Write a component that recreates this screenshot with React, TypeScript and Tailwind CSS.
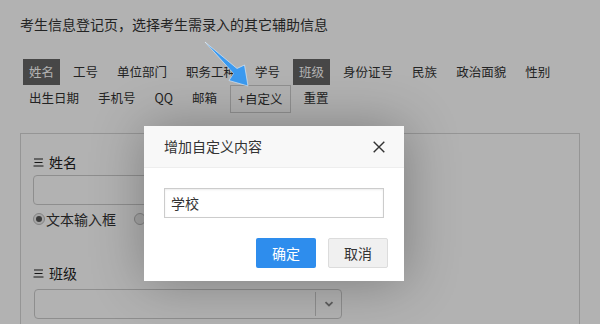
import React from 'react';

const font = { fontFamily: '"Noto Sans CJK SC", "Noto Sans", sans-serif' };

const rowOne = ['姓名', '工号', '单位部门', '职务工种', '学号', '班级', '身份证号', '民族', '政治面貌', '性别'];
const active = ['姓名', '班级'];

const Tag: React.FC<{ label: string; dark?: boolean; boxed?: boolean }> = ({ label, dark, boxed }) => (
    <span
        className={`h-[26px] mr-[7px] leading-[26px] text-[12.5px] whitespace-nowrap ${
            boxed ? 'h-[28px] px-[7px] border border-[#cfcfcf]' : 'px-[6px]'
        } ${dark ? 'bg-[#666] text-white' : 'text-[#333]'}`}
    >
        {label}
    </span>
);

const ListIcon = () => (
    <svg width="11" height="9" viewBox="0 0 11 9" className="mr-[5px]">
        <path d="M1 1H10M1.5 4.5H9.5M0.5 8H10.5" stroke="#222" strokeWidth="1.2" />
    </svg>
);

export default function App() {
    return (
        <div className="relative w-[600px] h-[324px] overflow-hidden bg-white" style={font}>
            {/* page */}
            <div className="px-5 pt-[14px]">
                <p className="text-[14px] leading-[20px] text-[#333]">考生信息登记页，选择考生需录入的其它辅助信息</p>

                <div className="mt-[25px] pl-[3px] flex items-start">
                    {rowOne.map((t) => (
                        <Tag key={t} label={t} dark={active.includes(t)} />
                    ))}
                </div>
                <div className="pl-[3px] flex items-start">
                    <Tag label="出生日期" />
                    <Tag label="手机号" />
                    <Tag label="QQ" />
                    <Tag label="邮箱" />
                    <Tag label="+自定义" boxed />
                    <Tag label="重置" />
                </div>
            </div>

            {/* form panel */}
            <div className="mx-5 mt-[20px] h-[260px] border border-[#d6d6d6] pl-3 pt-[18px]">
                <div className="flex items-center h-[20px] text-[14px] text-[#222]">
                    <ListIcon />
                    姓名
                </div>
                <div className="mt-[3px] w-[308px] h-[30px] rounded-[4px] border border-[#ccc] bg-white" />
                <div className="mt-[4px] flex items-center h-[20px] text-[14px] text-[#333]">
                    <span className="w-[12px] h-[12px] rounded-full border border-[#bbb] bg-[#eee] flex items-center justify-center">
                        <span className="w-[6px] h-[6px] rounded-full bg-[#555]" />
                    </span>
                    <span className="ml-[1px]">文本输入框</span>
                    <span className="ml-[18px] w-[12px] h-[12px] rounded-full border border-[#bbb] bg-[#eee]" />
                </div>

                <div className="mt-[34px] flex items-center h-[20px] text-[14px] text-[#222]">
                    <ListIcon />
                    班级
                </div>
                <div className="mt-[6px] ml-[1px] w-[308px] h-[30px] rounded-[4px] border border-[#ccc] bg-white flex justify-end">
                    <div className="w-[26px] my-[2px] border-l border-[#ccc] flex items-center justify-center">
                        <svg width="10" height="6" viewBox="0 0 10 6">
                            <path d="M1.5 1.2L5 4.5L8.5 1.2" stroke="#888" strokeWidth="1.8" fill="none" />
                        </svg>
                    </div>
                </div>
            </div>

            {/* mask */}
            <div className="absolute inset-0 bg-black/30" />

            {/* annotation arrow */}
            <svg className="absolute left-0 top-0" width="600" height="324" viewBox="0 0 600 324">
                <polygon points="205,42 237,68.5 244.5,65 248,86 229,80.5 233.5,73.5" fill="#3b9af0" stroke="#e8f2fc" strokeWidth="0.6" />
            </svg>

            {/* dialog */}
            <div className="absolute left-[144px] top-[126px] w-[260px] h-[155px] bg-white shadow-[1px_1px_50px_rgba(0,0,0,0.3)]">
                <div className="h-[42px] bg-[#f8f8f8] border-b border-[#eee] flex items-center justify-between pl-5 pr-[19px]">
                    <span className="text-[14px] text-[#333]">增加自定义内容</span>
                    <svg width="12" height="12" viewBox="0 0 12 12">
                        <path d="M0.7 0.7L11.3 11.3M11.3 0.7L0.7 11.3" stroke="#333" strokeWidth="1.4" />
                    </svg>
                </div>
                <div className="mt-[20px] ml-5 w-[220px] h-[30px] border border-[#ccc] shadow-[inset_0_1px_2px_rgba(0,0,0,0.08)] px-[6px] leading-[28px] text-[14px] text-[#333]">
                    学校
                </div>
                <div className="mt-[20px] flex justify-end gap-3 pr-4">
                    <button className="w-[60px] h-[30px] rounded-[2px] bg-[#2e8ded] text-white text-[14px]">确定</button>
                    <button className="w-[60px] h-[30px] rounded-[2px] bg-[#f0f0f0] border border-[#dcdcdc] text-[#333] text-[14px]">取消</button>
                </div>
            </div>
        </div>
    );
}
